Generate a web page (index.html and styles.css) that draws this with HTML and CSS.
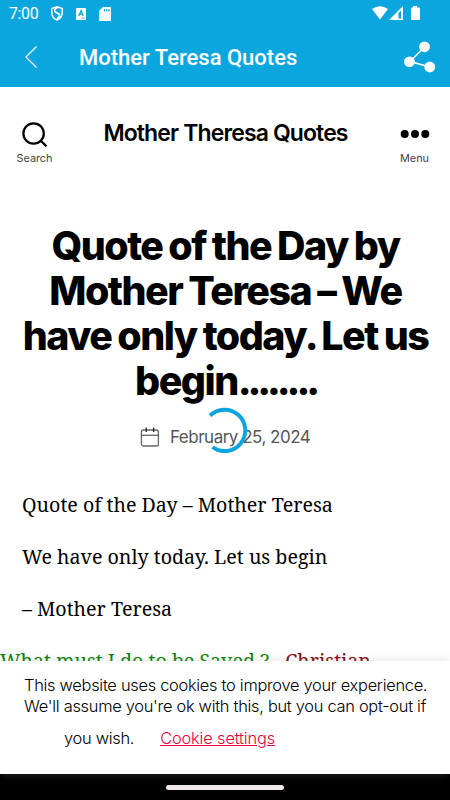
FILE: index.html
```html
<!DOCTYPE html>
<html lang="en">
<head>
    <meta charset="UTF-8">
    <meta name="viewport" content="width=device-width, initial-scale=1.0">
    <title>Mother Teresa Quotes</title>
    <link rel="stylesheet" href="styles.css">
</head>
<body>
    <div class="status-bar">
        <span class="clock">7:00</span>
        <svg class="shield" width="12" height="15" viewBox="0 0 12 15" fill="none" stroke="#fff" stroke-width="1.5">
            <path d="M6 .8L11.200 2.600V7c0 3.200-2 5.600-5.200 7C2.800 12.600.8 10.200.8 7V2.600z"/>
            <path d="M6.500 1.500L3.800 3.500v2l4.700 3v2L6 12.800"/>
        </svg>
        <svg class="keyboard" width="10" height="12" viewBox="0 0 10 12">
            <rect width="10" height="12" rx="1" fill="#fff"/>
            <path d="M2.800 8L5 2.700 7.200 8M3.600 6.200h2.800M5.500 10.200h1M7.500 10.200h1" fill="none" stroke="#0ca6de" stroke-width="1.300"/>
        </svg>
        <svg class="sd-card" width="12" height="14" viewBox="0 0 12 14">
            <path d="M4 0h7q1 0 1 1v12q0 1-1 1H1q-1 0-1-1V4z" fill="#fff"/>
            <path d="M5.500 2v2.500M7.800 2v2.500M10 2v2.500" stroke="#0ca6de" stroke-width="1.200"/>
        </svg>
        <svg class="signals" width="50" height="15" viewBox="0 0 50 15" fill="#fff">
            <path d="M0 3Q8-2.500 16 3L8 13.500z"/>
            <path d="M31 0v14H17z"/>
            <path d="M29 4.500v8h-2.500V7z" fill="#0ca6de"/>
            <path d="M41 0h4v1.500h2q1 0 1 1V13q0 1-1 1h-7q-1 0-1-1V2.500q0-1 1-1h1z"/>
        </svg>
    </div>
    <header class="app-bar">
        <svg class="back" width="12" height="22" viewBox="0 0 12 22" fill="none" stroke="#fff" stroke-width="1.200">
            <path d="M11.500.5L1 11l10.500 10.500"/>
        </svg>
        <div class="app-title">Mother Teresa Quotes</div>
        <svg class="share" width="32" height="32" viewBox="0 0 32 32" fill="#fff">
            <path d="M20.500 6L6 20.500 26 26" fill="none" stroke="#fff" stroke-width="1.500"/>
            <circle cx="20.500" cy="5.800" r="5.400"/>
            <circle cx="5.400" cy="20.800" r="5.400"/>
            <circle cx="25.800" cy="26" r="5.400"/>
        </svg>
    </header>

    <main class="page">
        <div class="site-header">
            <div class="toggle">
                <svg width="26" height="26" viewBox="0 0 26 26" fill="none" stroke="#000" stroke-width="2.300">
                    <circle cx="11.600" cy="11.500" r="10.200"/>
                    <path d="M18.500 18.500l6 5.800"/>
                </svg>
                <span>Search</span>
            </div>
            <div class="site-title">Mother Theresa Quotes</div>
            <div class="toggle">
                <svg width="30" height="26" viewBox="0 0 30 26">
                    <circle cx="4.700" cy="12.100" r="4"/>
                    <circle cx="15" cy="12.100" r="4"/>
                    <circle cx="25.300" cy="12.100" r="4"/>
                </svg>
                <span>Menu</span>
            </div>
        </div>

        <h1>Quote of the Day by<br>Mother Teresa – We<br>have only today. Let us<br>begin<span class="dots">........</span></h1>

        <div class="post-meta">
            <svg width="20" height="20" viewBox="0 0 20 20" fill="none" stroke="#666" stroke-width="1.300">
                <rect x="1.400" y="3" width="17" height="16" rx="2"/>
                <path d="M1.400 8.300h17"/>
                <path d="M6.200.5v4.500M13.600.5v4.500" stroke="#222"/>
            </svg>
            <span>February 25, 2024</span>
            <!-- loading spinner -->
            <svg class="spinner" width="46" height="46" viewBox="0 0 46 46" fill="none" stroke="#0ca6de" stroke-width="4">
                <path d="M8 8.700A20.700 20.700 0 1 1 10.500 40.200"/>
            </svg>
        </div>

        <div class="entry">
            <p>Quote of the Day – Mother Teresa</p>
            <p>We have only today. Let us begin</p>
            <p>– Mother Teresa</p>
        </div>
        <div class="more"><span class="green">What must I do to be Saved ?</span><span class="red">Christian</span></div>
    </main>

    <div class="cookie-bar">
        <div>This website uses cookies to improve your experience.</div>
        <div>We'll assume you're ok with this, but you can opt-out if</div>
        <div class="cookie-actions"><span>you wish.</span><a href="#">Cookie settings</a></div>
    </div>
    <div class="nav-bar"><div class="handle"></div></div>
</body>
</html>
```

FILE: styles.css
```css
* {
    box-sizing: border-box;
}
body {
    margin: 0;
    height: 800px;
    display: flex;
    flex-direction: column;
    overflow: hidden;
    background: #fff;
    color: #000;
    font-family: Inter, sans-serif;
}
svg {
    display: block;
    flex: none;
}
.status-bar {
    height: 27px;
    flex: none;
    display: flex;
    align-items: center;
    padding: 0 28px 0 9px;
    background: #0ca6de;
    color: #fff;
    font-family: Roboto, sans-serif;
    font-size: 16px;
}
.clock {
    width: 42px;
    letter-spacing: -0.4px;
}
.keyboard {
    margin-left: 13px;
}
.sd-card {
    margin-left: 13px;
}
.signals {
    margin-left: auto;
}
.app-bar {
    height: 60px;
    flex: none;
    display: flex;
    align-items: center;
    padding: 0 14px 0 25px;
    background: #0ca6de;
    color: #fff;
}
.app-title {
    flex: 1;
    margin-left: 42px;
    padding-top: 1px;
    font-family: Roboto, sans-serif;
    font-size: 22px;
    font-weight: 500;
}
.page {
    flex: 1;
    min-height: 0;
    overflow: hidden;
}
.site-header {
    display: flex;
    justify-content: space-between;
    padding: 35px 18px 0 17px;
}
.toggle {
    width: 35px;
    display: flex;
    flex-direction: column;
    align-items: center;
    color: #444;
    font-size: 10.9px;
    line-height: 14px;
    font-weight: 400;
    letter-spacing: -0.05px;
    white-space: nowrap;
}
.toggle span {
    margin-top: 3px;
}
.site-title {
    padding-left: 2px;
    font-size: 23px;
    line-height: 23px;
    font-weight: 600;
    letter-spacing: -0.88px;
}
h1 {
    margin: 59px 0 0;
    padding-left: 1px;
    font-size: 39.4px;
    line-height: 44.87px;
    font-weight: 800;
    letter-spacing: -1.5px;
    word-spacing: -1.2px;
    text-align: center;
    white-space: nowrap;
}
.dots {
    letter-spacing: -4.1px;
}
.post-meta {
    position: relative;
    display: flex;
    align-items: center;
    height: 24px;
    margin-top: 21px;
    padding-left: 140px;
    gap: 10px;
    color: #555;
    font-size: 17px;
    letter-spacing: -0.5px;
}
.spinner {
    position: absolute;
    left: 202px;
    top: -18px;
}
.entry {
    padding: 42px 22px 0;
    font-family: "Noto Serif", "Liberation Serif", serif;
    font-size: 19.65px;
    white-space: nowrap;
}
.entry p {
    height: 28px;
    margin: 0 0 24px;
    line-height: 28px;
}
.more {
    display: flex;
    gap: 16px;
    font-family: "Noto Serif", "Liberation Serif", serif;
    font-size: 19.6px;
    line-height: 28px;
    white-space: nowrap;
}
.green {
    color: #008000;
}
.red {
    color: #800000;
}
.cookie-bar {
    position: relative;
    height: 113px;
    flex: none;
    padding: 14px 24px 0;
    background: #fff;
    box-shadow: 0 -1px 10px rgba(172, 171, 171, 0.3);
    font-size: 16.4px;
    line-height: 21px;
    font-weight: 300;
    letter-spacing: -0.28px;
    white-space: nowrap;
}
.cookie-actions {
    display: flex;
    gap: 26px;
    padding: 11px 0 0 40px;
}
.cookie-actions a {
    color: #e5003c;
    letter-spacing: -0.15px;
}
.nav-bar {
    height: 26px;
    flex: none;
    display: flex;
    align-items: center;
    justify-content: center;
    background: #000;
}
.handle {
    width: 118px;
    height: 5px;
    border-radius: 3px;
    background: #eee8ee;
}
```
